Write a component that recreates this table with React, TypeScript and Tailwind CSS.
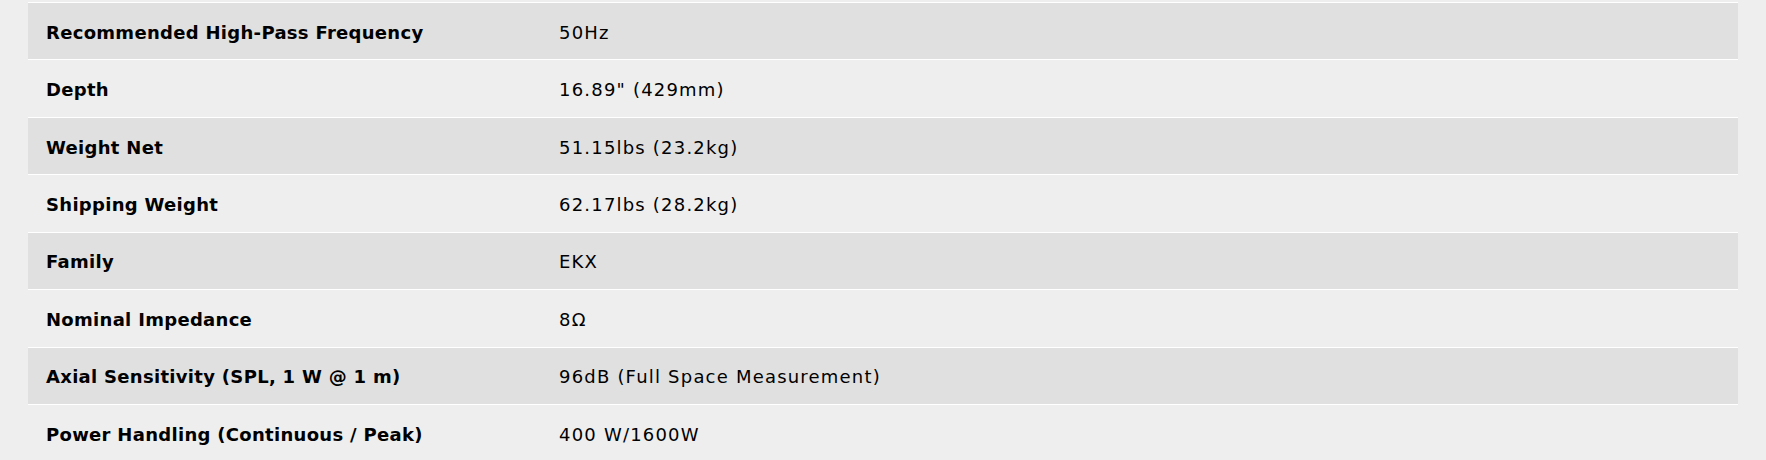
import React from "react";

const rows: [string, string][] = [
  ["Recommended High-Pass Frequency", "50Hz"],
  ["Depth", "16.89\" (429mm)"],
  ["Weight Net", "51.15lbs (23.2kg)"],
  ["Shipping Weight", "62.17lbs (28.2kg)"],
  ["Family", "EKX"],
  ["Nominal Impedance", "8Ω"],
  ["Axial Sensitivity (SPL, 1 W @ 1 m)", "96dB (Full Space Measurement)"],
  ["Power Handling (Continuous / Peak)", "400 W/1600W"],
];

export default function App() {
  return (
    <div
      className="w-[1766px] h-[460px] overflow-hidden bg-[#eeeeee] pt-[2px] pl-[28px] pr-[28px] text-[#000000]"
      style={{ fontFamily: '"DejaVu Sans", "Liberation Sans", sans-serif' }}
    >
      {rows.map(([k, v], i) => (
        <div
          key={k}
          className={`flex items-center h-[57.43px] border-t border-white ${
            i % 2 === 0 ? "bg-[#e0e0e0]" : "bg-[#eeeeee]"
          }`}
        >
          <div className="w-[531px] pl-[18px] pt-[2px] text-[18px] font-bold tracking-[0.3px]">{k}</div>
          <div className="pt-[2px] text-[18px] tracking-[1.2px]">{v}</div>
        </div>
      ))}
    </div>
  );
}
